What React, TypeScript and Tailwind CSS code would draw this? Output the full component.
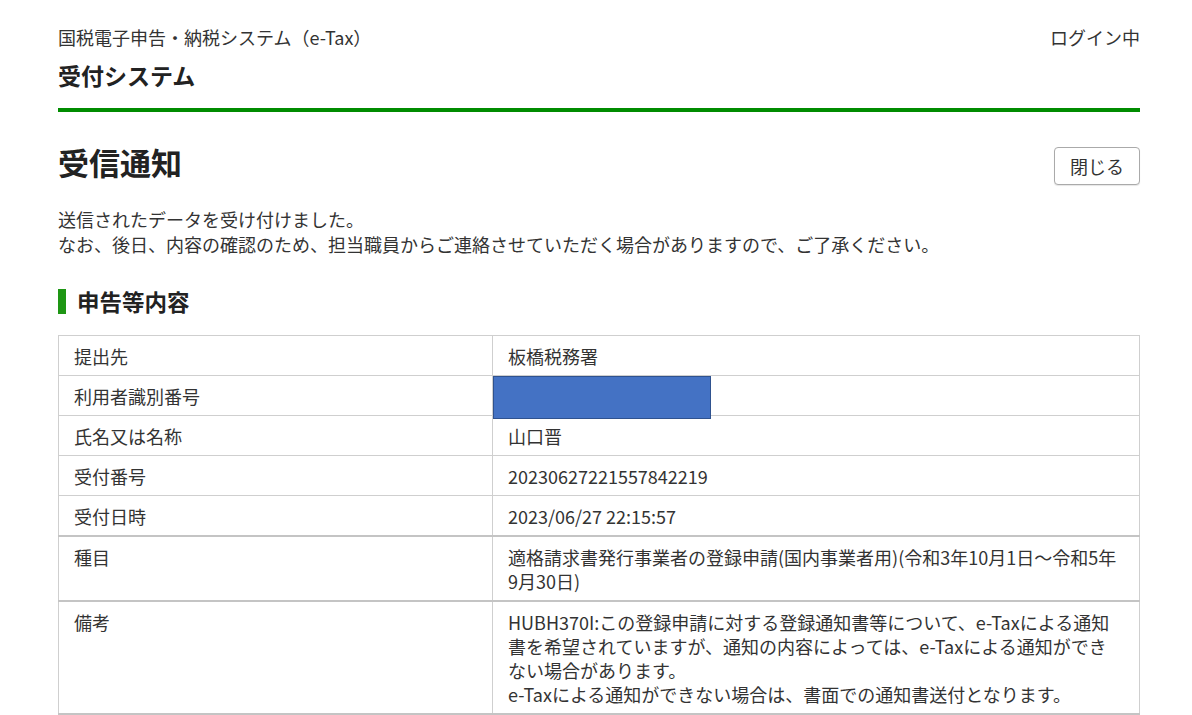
import React from 'react';

const rows: { label: string; value: React.ReactNode; redacted?: boolean; thick?: boolean }[] = [
  { label: '提出先', value: '板橋税務署' },
  { label: '利用者識別番号', value: '', redacted: true },
  { label: '氏名又は名称', value: '山口晋' },
  { label: '受付番号', value: '20230627221557842219' },
  { label: '受付日時', value: '2023/06/27 22:15:57', thick: true },
  {
    label: '種目',
    value: (
      <>
        適格請求書発行事業者の登録申請(国内事業者用)(令和3年10月1日～令和5年
        <br />
        9月30日)
      </>
    ),
    thick: true,
  },
  {
    label: '備考',
    value: (
      <>
        HUBH370I:この登録申請に対する登録通知書等について、e-Taxによる通知
        <br />
        書を希望されていますが、通知の内容によっては、e-Taxによる通知ができ
        <br />
        ない場合があります。
        <br />
        e-Taxによる通知ができない場合は、書面での通知書送付となります。
      </>
    ),
    thick: true,
  },
];

export default function App() {
  return (
    <div className="min-h-screen bg-white pl-[58px] pr-[52px] text-[18px] text-[#333] font-['Noto_Sans_CJK_JP','Noto_Sans',sans-serif]">
      <header className="flex items-center justify-between pt-[26px] leading-[22px]">
        <span>国税電子申告・納税システム（e-Tax）</span>
        <span>ログイン中</span>
      </header>
      <div className="mt-[12px] text-[23px] font-bold leading-[30px] text-[#222]">受付システム</div>
      <div className="mt-[18px] h-[4px] bg-[#008c00]" />

      <div className="mt-[30px] flex items-start justify-between">
        <h1 className="text-[31px] font-bold leading-[40px] text-[#222]">受信通知</h1>
        <button className="mt-[5px] h-[38px] rounded-[4px] border border-[#aaa] bg-white px-[15px] text-[18px] text-[#333] shadow-[0_1px_1px_rgba(0,0,0,0.1)]">
          閉じる
        </button>
      </div>

      <p className="mt-[22px] leading-[25px]">
        送信されたデータを受け付けました。
        <br />
        なお、後日、内容の確認のため、担当職員からご連絡させていただく場合がありますので、ご了承ください。
      </p>

      <div className="mt-[32px] flex items-center gap-[11px]">
        <span className="h-[25px] w-[8px] bg-[#1e9614]" />
        <h2 className="text-[22.5px] font-bold leading-[25px] text-[#222]">申告等内容</h2>
      </div>

      <table className="mt-[21px] w-full border-collapse leading-[24px]">
        <tbody>
          {rows.map((r) => (
            <tr key={r.label} className={r.thick ? 'border-b-2 border-[#c4c4c4]' : 'border-b border-[#cfcfcf]'}>
              <td className="w-[434px] border border-[#cfcfcf] px-[15px] py-[7.5px] align-top">{r.label}</td>
              <td className="relative whitespace-nowrap border border-[#cfcfcf] px-[15px] py-[7.5px] align-top">
                {r.value}
                {r.redacted && (
                  <div className="absolute left-0 top-0 z-10 h-[43px] w-[218px] border border-[#2f528f] bg-[#4472c4]" />
                )}
                {r.redacted && <span>&nbsp;</span>}
              </td>
            </tr>
          ))}
        </tbody>
      </table>
      <div className="h-[20px]" />
    </div>
  );
}
